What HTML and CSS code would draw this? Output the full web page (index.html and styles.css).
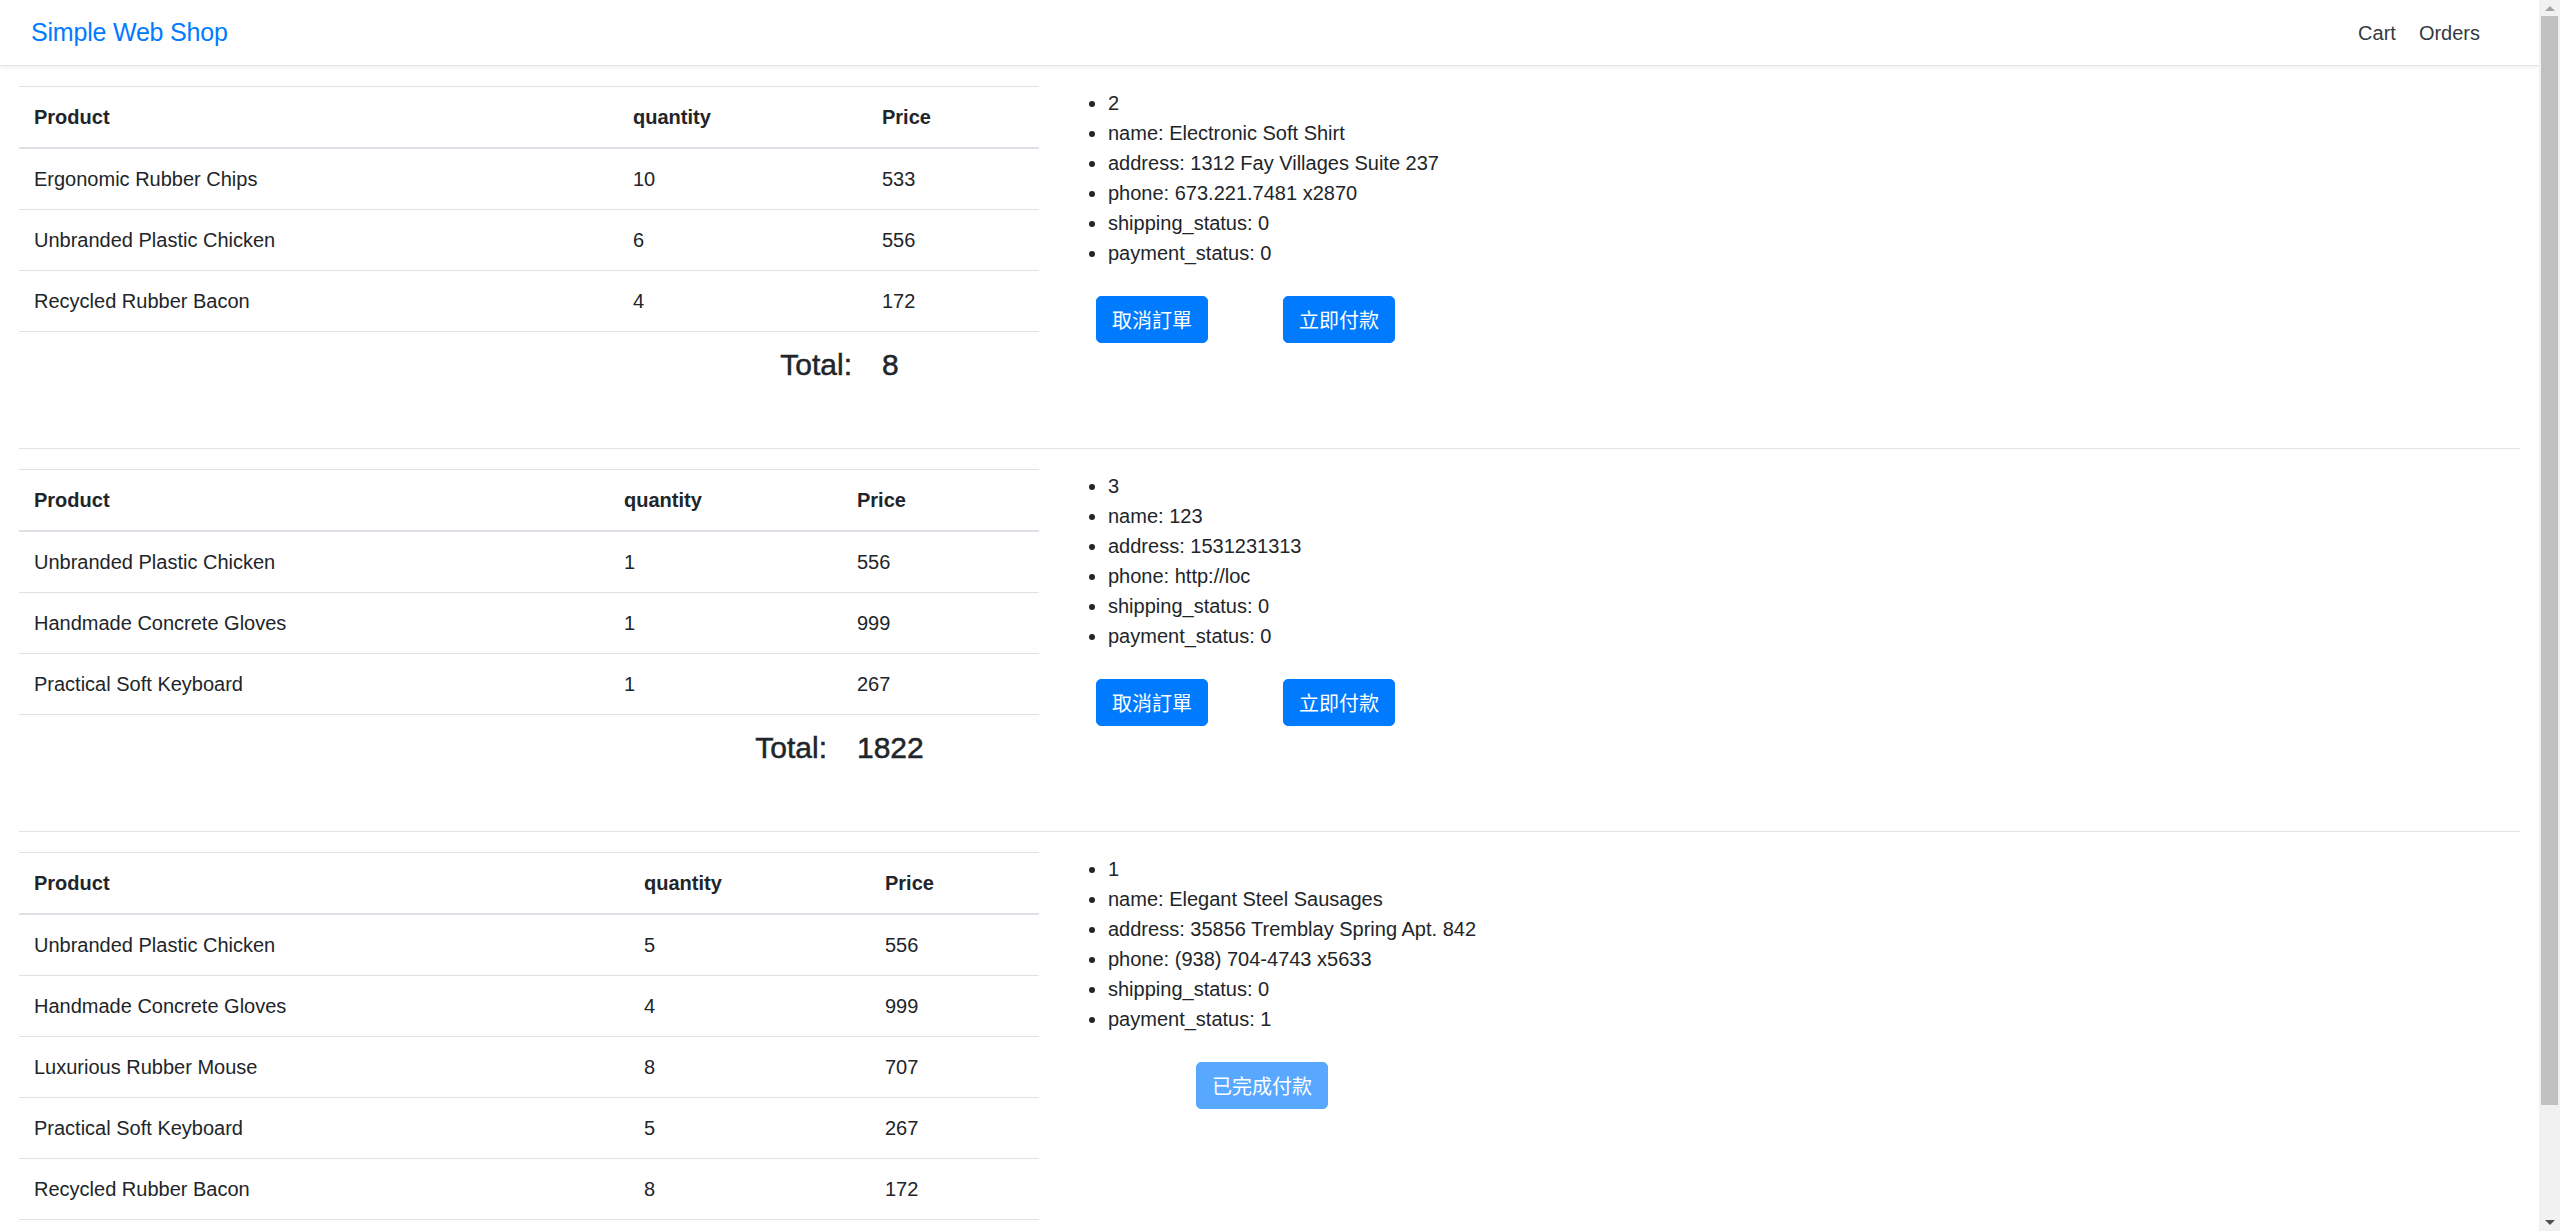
FILE: index.html
```html
<!DOCTYPE html>
<html lang="zh-Hant">
<head>
<meta charset="utf-8">
<title>Simple Web Shop</title>
<link rel="stylesheet" href="styles.css">
</head>
<body>
<nav class="navbar">
  <a class="brand" href="#">Simple Web Shop</a>
  <div class="nav-links">
    <a class="nav-link" href="#">Cart</a>
    <a class="nav-link" href="#">Orders</a>
  </div>
</nav>

<main class="container">
  <section class="order">
    <div class="order-items">
      <table class="table">
        <colgroup><col class="c1 o1"><col class="c2 o1"><col class="c3 o1"></colgroup>
        <thead><tr><th>Product</th><th>quantity</th><th>Price</th></tr></thead>
        <tbody>
          <tr><td>Ergonomic Rubber Chips</td><td>10</td><td>533</td></tr>
          <tr><td>Unbranded Plastic Chicken</td><td>6</td><td>556</td></tr>
          <tr><td>Recycled Rubber Bacon</td><td>4</td><td>172</td></tr>
          <tr class="total-row"><td></td><td class="right"><h4>Total:</h4></td><td><h4>8</h4></td></tr>
        </tbody>
      </table>
    </div>
    <div class="order-info">
      <ul class="info-list">
        <li>2</li>
        <li>name: Electronic Soft Shirt</li>
        <li>address: 1312 Fay Villages Suite 237</li>
        <li>phone: 673.221.7481 x2870</li>
        <li>shipping_status: 0</li>
        <li>payment_status: 0</li>
      </ul>
      <div class="actions">
        <button class="btn">取消訂單</button>
        <button class="btn">立即付款</button>
      </div>
    </div>
  </section>
  <hr class="sep">

  <section class="order">
    <div class="order-items">
      <table class="table">
        <colgroup><col class="c1 o2"><col class="c2 o2"><col class="c3 o2"></colgroup>
        <thead><tr><th>Product</th><th>quantity</th><th>Price</th></tr></thead>
        <tbody>
          <tr><td>Unbranded Plastic Chicken</td><td>1</td><td>556</td></tr>
          <tr><td>Handmade Concrete Gloves</td><td>1</td><td>999</td></tr>
          <tr><td>Practical Soft Keyboard</td><td>1</td><td>267</td></tr>
          <tr class="total-row"><td></td><td class="right"><h4>Total:</h4></td><td><h4>1822</h4></td></tr>
        </tbody>
      </table>
    </div>
    <div class="order-info">
      <ul class="info-list">
        <li>3</li>
        <li>name: 123</li>
        <li>address: 1531231313</li>
        <li>phone: http://loc</li>
        <li>shipping_status: 0</li>
        <li>payment_status: 0</li>
      </ul>
      <div class="actions">
        <button class="btn">取消訂單</button>
        <button class="btn">立即付款</button>
      </div>
    </div>
  </section>
  <hr class="sep">

  <section class="order">
    <div class="order-items">
      <table class="table">
        <colgroup><col class="c1 o3"><col class="c2 o3"><col class="c3 o3"></colgroup>
        <thead><tr><th>Product</th><th>quantity</th><th>Price</th></tr></thead>
        <tbody>
          <tr><td>Unbranded Plastic Chicken</td><td>5</td><td>556</td></tr>
          <tr><td>Handmade Concrete Gloves</td><td>4</td><td>999</td></tr>
          <tr><td>Luxurious Rubber Mouse</td><td>8</td><td>707</td></tr>
          <tr><td>Practical Soft Keyboard</td><td>5</td><td>267</td></tr>
          <tr><td>Recycled Rubber Bacon</td><td>8</td><td>172</td></tr>
          <tr class="total-row"><td></td><td class="right"><h4>Total:</h4></td><td><h4>2701</h4></td></tr>
        </tbody>
      </table>
    </div>
    <div class="order-info">
      <ul class="info-list">
        <li>1</li>
        <li>name: Elegant Steel Sausages</li>
        <li>address: 35856 Tremblay Spring Apt. 842</li>
        <li>phone: (938) 704-4743 x5633</li>
        <li>shipping_status: 0</li>
        <li>payment_status: 1</li>
      </ul>
      <div class="actions actions-done">
        <button class="btn btn-done" disabled>已完成付款</button>
      </div>
    </div>
  </section>
  <hr class="sep">
</main>

<div class="scrollbar" aria-hidden="true">
  <span class="sb-btn"><span class="arrow-up"></span></span>
  <span class="sb-track"><span class="sb-thumb"></span></span>
  <span class="sb-btn"><span class="arrow-down"></span></span>
</div>
</body>
</html>
```

FILE: styles.css
```css
html {
  font-family: "Liberation Sans", Arial, "Noto Sans CJK TC", sans-serif;
  font-size: 20px;
  line-height: 30px;
  color: #212529;
  background: #fff;
}

body {
  margin: 0 21px 0 0;
}

/* window scrollbar, drawn over the right edge */
.scrollbar {
  position: fixed;
  top: 0;
  right: 0;
  width: 21px;
  height: 100vh;
  background: #f1f1f1;
  display: flex;
  flex-direction: column;
}

.sb-btn {
  height: 16px;
  flex: none;
  display: flex;
  align-items: center;
  justify-content: center;
}

.sb-btn:last-child {
  height: 17px;
}

.arrow-up {
  width: 0;
  height: 0;
  border-left: 5px solid transparent;
  border-right: 5px solid transparent;
  border-bottom: 5px solid #a3a3a3;
}

.arrow-down {
  width: 0;
  height: 0;
  border-left: 5px solid transparent;
  border-right: 5px solid transparent;
  border-top: 5px solid #505050;
}

.sb-track {
  flex: 1;
  display: flex;
  flex-direction: column;
}

.sb-thumb {
  height: 1089px;
  margin: 0 2px;
  background: #c1c1c1;
}

/* navbar */
.navbar {
  display: flex;
  align-items: center;
  justify-content: space-between;
  height: 65px;
  padding: 0 59px 0 31px;
  background: #fff;
  box-shadow: 0 1px 0 rgba(0, 0, 0, 0.06), 0 2px 5px rgba(0, 0, 0, 0.08);
  position: relative;
}

.brand {
  font-size: 25px;
  line-height: 37px;
  color: #007bff;
  text-decoration: none;
  letter-spacing: -0.2px;
}

.nav-links {
  display: flex;
  gap: 23px;
}

.nav-link {
  color: #343a40;
  text-decoration: none;
  font-size: 20px;
  line-height: 30px;
}

/* content */
.container {
  padding: 21px 19px 0 19px;
}

.order {
  display: grid;
  grid-template-columns: 1020px 1fr;
  column-gap: 19px;
  align-items: start;
}

.table {
  width: 1020px;
  border-collapse: collapse;
  table-layout: fixed;
  margin-bottom: 20px;
}

.c1.o1 { width: 599px; }
.c2.o1 { width: 249px; }
.c3.o1 { width: 172px; }
.c1.o2 { width: 590px; }
.c2.o2 { width: 233px; }
.c3.o2 { width: 197px; }
.c1.o3 { width: 610px; }
.c2.o3 { width: 241px; }
.c3.o3 { width: 169px; }

.table th,
.table td {
  padding: 15px;
  text-align: left;
  vertical-align: top;
  border-top: 1px solid #dee2e6;
  line-height: 30px;
}

.table thead th {
  font-weight: bold;
  vertical-align: bottom;
  border-bottom: 2px solid #dee2e6;
}

.table td.right {
  text-align: right;
}

.total-row h4 {
  margin: 0 0 10px 0;
  font-size: 30px;
  line-height: 36px;
  font-weight: normal;
  -webkit-text-stroke: 0.5px #212529;
}

.info-list {
  margin: 2px 0 28px 0;
  padding-left: 50px;
  list-style: disc;
}

.info-list li {
  line-height: 30px;
}

.actions {
  display: flex;
  column-gap: 75px;
  padding-left: 38px;
}

.actions-done {
  padding-left: 138px;
}

.btn {
  font-family: "Noto Sans CJK TC", "Liberation Sans", sans-serif;
  font-size: 20px;
  line-height: 30px;
  height: 47px;
  padding: 7.5px 15px;
  color: #fff;
  background: #007bff;
  border: 1px solid #007bff;
  border-radius: 5px;
  cursor: pointer;
}

.btn-done {
  opacity: 0.65;
  cursor: default;
}

.sep {
  margin: 20px 0;
  border: 0;
  border-top: 1px solid #e3e3e3;
}
```
